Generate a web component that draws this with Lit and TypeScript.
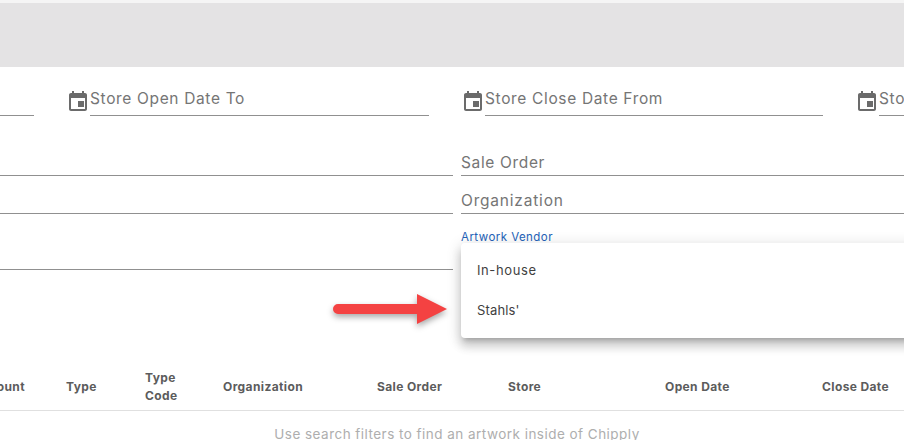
import { LitElement, html, css } from "lit";
import { customElement } from "lit/decorators.js";

const calendar = html`<svg class="cal" viewBox="0 0 24 24" width="24" height="24"><path fill="#6b6b6b" d="M18 11h-6v6h6v-6zM16 1v2H8V1H6v2H5c-1.110 0-1.990.9-1.990 2L3 19c0 1.100.89 2 2 2h14c1.100 0 2-.9 2-2V5c0-1.100-.9-2-2-2h-1V1h-2zm3 18H5V8h14v11z"/></svg>`;

@customElement("app-root")
export class AppRoot extends LitElement {
  static styles = css`
    :host {
      display: block;
      position: relative;
      width: 904px;
      height: 440px;
      overflow: hidden;
      background: #fff;
      font-family: Inter, "Open Sans", sans-serif;
      color: #757575;
    }
    .strip { height: 64px; margin-top: 3px; background: #e4e3e4; }
    .top-edge { height: 3px; background: #f5f5f5; margin-bottom: -3px; }
    .dates { display: flex; gap: 35px; height: 32px; margin-top: 17px; width: 1000px; }
    .date { display: flex; align-items: flex-start; gap: 3px; flex: none; }
    .date.d0 { width: 34px; }
    .date.d1 { width: 360px; }
    .date.d2 { width: 359px; }
    .date.d3 { width: 300px; }
    .cal { flex: none; margin: 6px -3px 0 -3px; }
    .line { flex: 1; height: 32px; border-bottom: 1px solid #909090; box-sizing: border-box; font-size: 15.500px; line-height: 30px; white-space: nowrap; letter-spacing: 0.65px; overflow: hidden; }
    .form { display: grid; grid-template-columns: 453px 443px; column-gap: 8px; }
    .f { border-bottom: 1px solid #909090; box-sizing: border-box; font-size: 15.500px; white-space: nowrap; line-height: 33px; height: 30px; letter-spacing: 0.65px; }
    .r1 { margin-top: 30px; }
    .r2 { margin-top: 8px; }
    .org { letter-spacing: 0.8px; }
    .r3 { margin-top: 26px; }
    .vendor { position: relative; }
    .floating { position: absolute; left: 0; top: -10px; font-size: 11.500px; line-height: 14px; color: #2462b8; letter-spacing: 0.45px; }
    .menu {
      position: absolute;
      left: 461px;
      top: 243px;
      width: 460px;
      height: 95px;
      padding: 8px 0;
      box-sizing: border-box;
      background: #fff;
      border-radius: 4px;
      box-shadow: 0 5px 5px -3px rgba(0,0,0,.2), 0 8px 10px 1px rgba(0,0,0,.14), 0 3px 14px 2px rgba(0,0,0,.12);
      color: #3f3f3f;
      font-size: 13px;
      letter-spacing: 0.6px;
    }
    .opt { height: 40px; line-height: 38px; padding-left: 16px; }
    .opt.tight { letter-spacing: 0.15px; }
    .arrow { position: absolute; left: 328px; top: 288px; filter: drop-shadow(0 3px 3px rgba(0,0,0,.35)); }
    .head {
      display: grid;
      grid-template-columns: 25px 41px 79px 78px 154px 131px 157px 157px 100px;
      align-items: center;
      height: 54px;
      padding-top: 6px;
      margin-top: 87px;
      width: 930px;
      border-bottom: 1px solid #e0e0e0;
      box-sizing: border-box;
      font-size: 12px;
      font-weight: 700;
      line-height: 18px;
      letter-spacing: 0.38px;
      color: #5c5c5c;
    }
    .head > div { white-space: nowrap; }
    .amount { display: flex; justify-content: flex-end; }
    .empty { width: 914px; text-align: center; font-size: 13.500px; line-height: 20px; margin-top: 13px; letter-spacing: 0.47px; color: #aeaeae; }
  `;

  render() {
    return html`
      <div class="top-edge"></div>
      <div class="strip"></div>
      <div class="dates">
        <div class="date d0"><div class="line"></div></div>
        <div class="date d1">${calendar}<div class="line">Store Open Date To</div></div>
        <div class="date d2">${calendar}<div class="line">Store Close Date From</div></div>
        <div class="date d3">${calendar}<div class="line">Store Close Date To</div></div>
      </div>
      <div class="form">
        <div class="f r1"></div><div class="f r1">Sale Order</div>
        <div class="f r2"></div><div class="f r2 org">Organization</div>
        <div class="f r3"></div>
        <div class="f r3 vendor"><span class="floating">Artwork Vendor</span></div>
      </div>
      <div class="head">
        <div class="amount">Amount</div><div></div>
        <div>Type</div>
        <div>Type<br />Code</div>
        <div>Organization</div>
        <div>Sale Order</div>
        <div>Store</div>
        <div>Open Date</div>
        <div>Close Date</div>
      </div>
      <div class="empty">Use search filters to find an artwork inside of Chipply</div>
      <div class="menu">
        <div class="opt">In-house</div>
        <div class="opt tight">Stahls'</div>
      </div>
      <svg class="arrow" width="124" height="42" viewBox="0 0 124 42">
        <path fill="#f44242" d="M10 16h79V6l30 15-30 15V26H10a5 5 0 0 1 0-10z" />
      </svg>
    `;
  }
}
